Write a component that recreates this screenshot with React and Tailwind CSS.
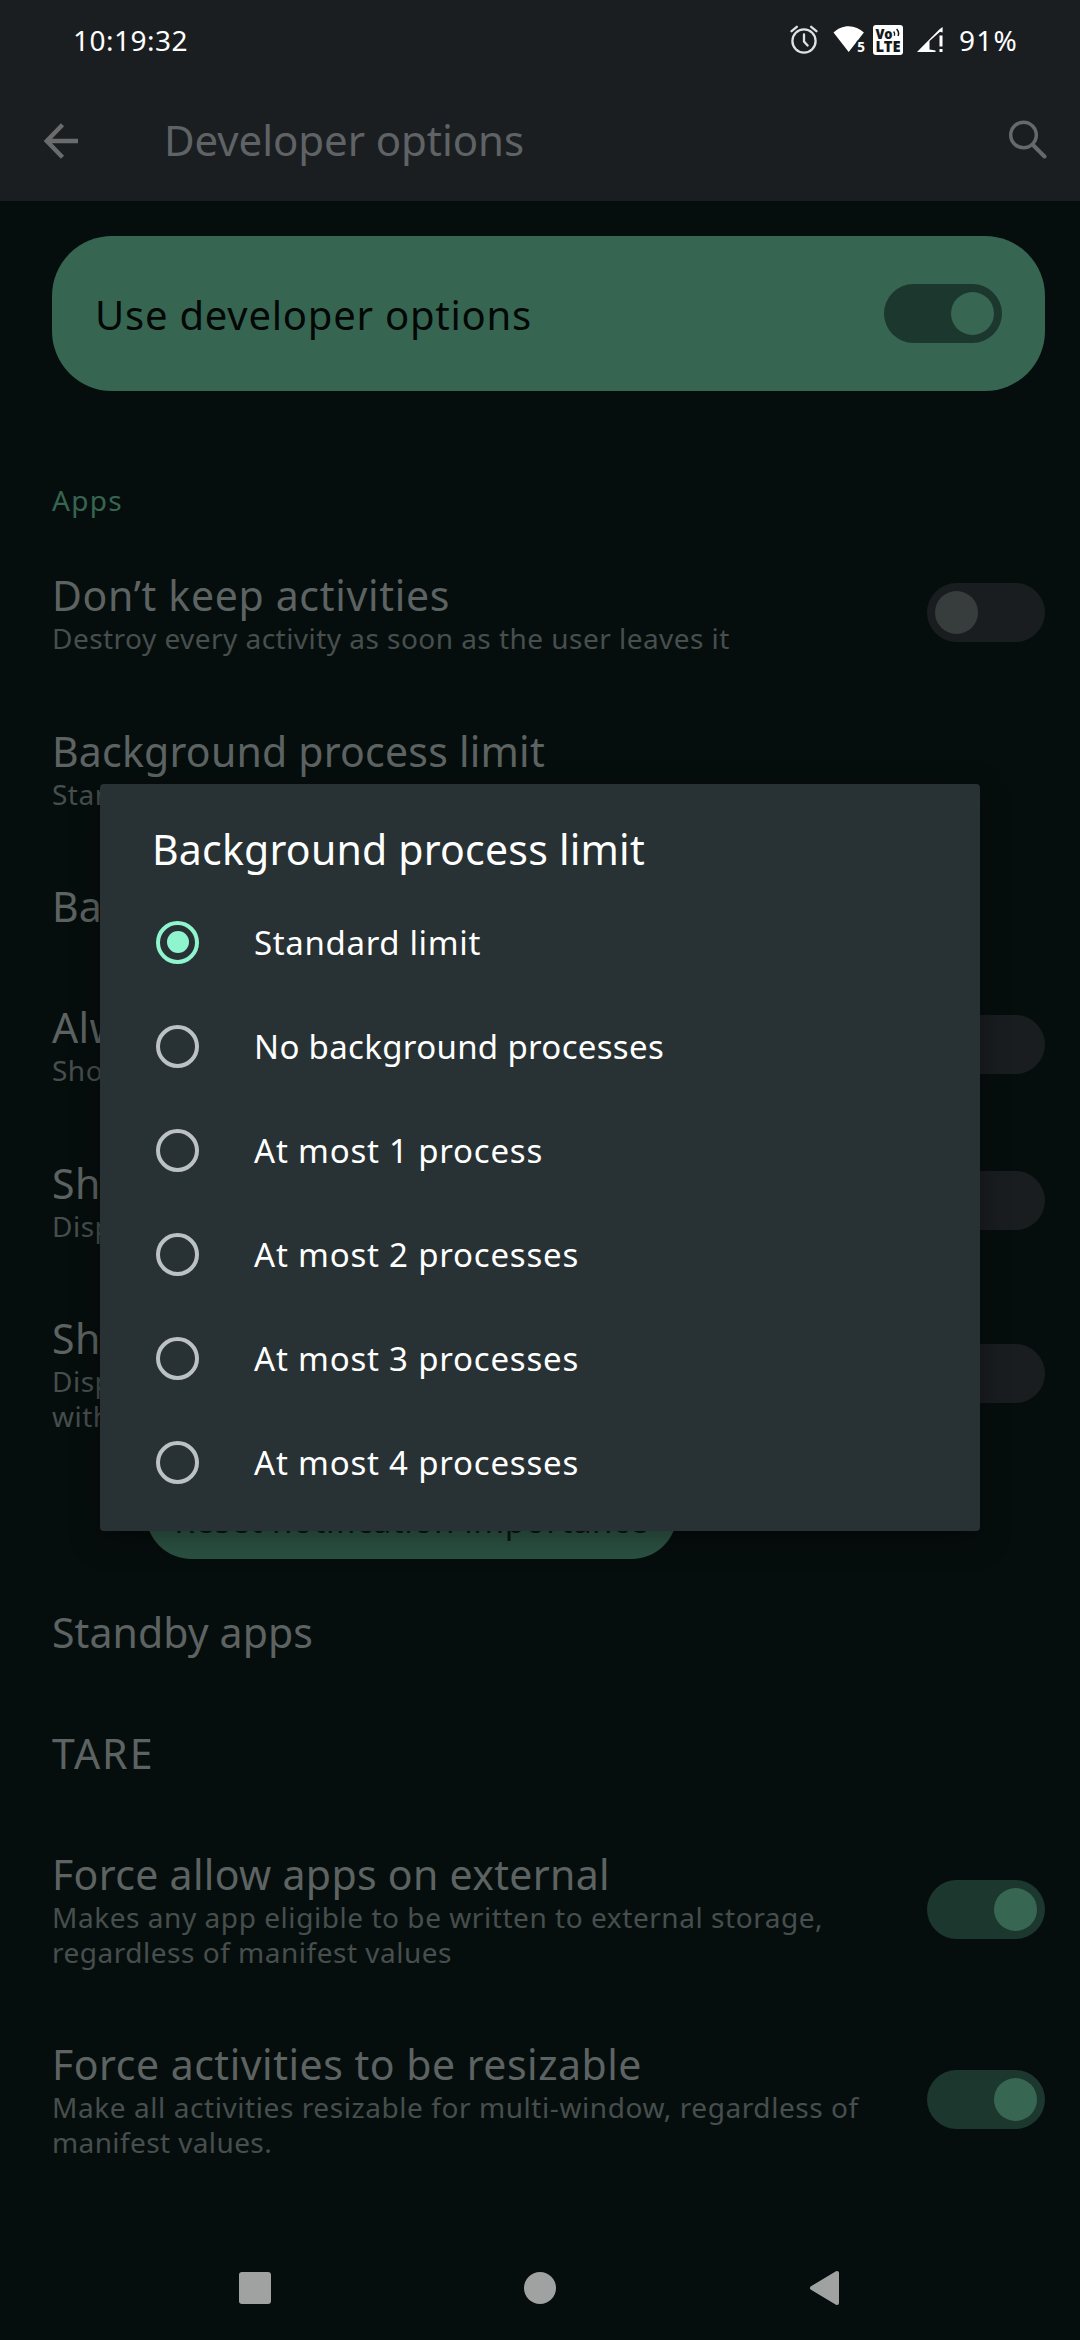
import { useState } from 'react';

const preferences = [
  {
    title: 'Don’t keep activities',
    tracking: 'tracking-[0.67px]',
    lines: [{ text: 'Destroy every activity as soon as the user leaves it', tracking: 'tracking-[0.46px]' }],
    checked: false,
  },
  {
    title: 'Background process limit',
    tracking: 'tracking-[0.22px]',
    lines: [{ text: 'Standard limit', tracking: 'tracking-[0.5px]' }],
  },
  { title: 'Background check', tracking: 'tracking-[0.22px]', lines: [] },
  {
    title: 'Always show crash dialog',
    tracking: 'tracking-[0.4px]',
    lines: [{ text: 'Show dialog every time an app crashes', tracking: 'tracking-[0.5px]' }],
    checked: false,
  },
  {
    title: 'Show background ANRs',
    tracking: 'tracking-[0.4px]',
    lines: [{ text: 'Display App Not Responding dialog for background apps', tracking: 'tracking-[0.5px]' }],
    checked: false,
  },
  {
    title: 'Show notification channel warnings',
    tracking: 'tracking-[0.4px]',
    lines: [
      { text: 'Displays on-screen warning when an app posts', tracking: 'tracking-[0.5px]' },
      { text: 'without a valid channel', tracking: 'tracking-[0.5px]' },
    ],
    checked: false,
  },
];

const morePreferences = [
  { title: 'Standby apps', tracking: 'tracking-[0.09px]', lines: [] },
  { title: 'TARE', tracking: 'tracking-[2px]', lines: [] },
  {
    title: 'Force allow apps on external',
    tracking: 'tracking-[0.32px]',
    lines: [
      { text: 'Makes any app eligible to be written to external storage,', tracking: 'tracking-[0.55px]' },
      { text: 'regardless of manifest values', tracking: 'tracking-[0.51px]' },
    ],
    checked: true,
  },
  {
    title: 'Force activities to be resizable',
    tracking: 'tracking-[0.5px]',
    lines: [
      { text: 'Make all activities resizable for multi-window, regardless of', tracking: 'tracking-[0.57px]' },
      { text: 'manifest values.', tracking: 'tracking-[0.39px]' },
    ],
    checked: true,
  },
];

const limits = [
  { label: 'Standard limit', tracking: 'tracking-[0.65px]' },
  { label: 'No background processes', tracking: 'tracking-[0.33px]' },
  { label: 'At most 1 process', tracking: 'tracking-[0.8px]' },
  { label: 'At most 2 processes', tracking: 'tracking-[0.8px]' },
  { label: 'At most 3 processes', tracking: 'tracking-[0.8px]' },
  { label: 'At most 4 processes', tracking: 'tracking-[0.8px]' },
];

function Switch({ checked }) {
  return (
    <div
      className={`flex h-[59px] w-[118px] shrink-0 items-center rounded-full px-2 ${
        checked ? 'justify-end bg-[#1b372e]' : 'justify-start bg-[#1a1d20]'
      }`}
    >
      <div className={`size-[43px] rounded-full ${checked ? 'bg-[#376653]' : 'bg-[#363d3c]'}`} />
    </div>
  );
}

function Preference({ title, tracking, lines, checked }) {
  return (
    <div className="flex items-center justify-between pr-[35px] pl-[52px]">
      <div className="flex flex-col py-[35px] whitespace-nowrap">
        <p className={`text-[41px] leading-[51px] text-[#5d6362] ${tracking}`}>{title}</p>
        {lines.map((line) => (
          <p key={line.text} className={`text-[28px] leading-[34.5px] text-[#474e4d] ${line.tracking}`}>
            {line.text}
          </p>
        ))}
      </div>
      {checked !== undefined && <Switch checked={checked} />}
    </div>
  );
}

function StatusBar() {
  return (
    <div className="flex h-[80px] items-center justify-between pr-[62px] pl-[73px] text-[28px] text-white">
      <span className="tracking-[0.49px]">10:19:32</span>
      <div className="flex items-center">
        <svg className="h-[32px] w-[28px]" viewBox="0 0 28 32" fill="none" stroke="#dfe2e3" strokeWidth="2.3" strokeLinecap="round">
          <circle cx="14" cy="17" r="11.6" />
          <path d="M14 10.5v7l3.6 4M1.6 7.2l5.2-4.4M26.4 7.2l-5.2-4.4" />
        </svg>
        {/* Wi-Fi 5 */}
        <svg className="ml-[15px] h-[32px] w-[33px]" viewBox="0 0 33 32">
          <path d="M.5 8.600C4.500 4.500 9.800 2.200 15.700 2.200S26.800 4.500 30.900 8.600L24.500 16.800L22.500 19.300L15.700 28z" fill="#fff" />
          <path d="M24.500 16.500h8.500v13h-10v-11z" fill="#1b1e21" />
          <text x="24.300" y="28.200" fontSize="13.500" fontWeight="700" fill="#fff">5</text>
        </svg>
        {/* VoLTE */}
        <svg className="ml-[7px] h-[32px] w-[30px]" viewBox="0 0 30 32">
          <rect y="1" width="30" height="30" rx="3" fill="#fff" />
          <text x="2.500" y="14.800" fontSize="14" fontWeight="900" fill="#15181b" textLength="17" lengthAdjust="spacingAndGlyphs">Vo</text>
          <path d="M20.600 7.600q1.800 1.900.8 4.200M23.600 5q3 3.200 1.500 7" fill="none" stroke="#15181b" strokeWidth="1.500" />
          <text x="2.500" y="28" fontSize="15" fontWeight="900" fill="#15181b" textLength="25" lengthAdjust="spacingAndGlyphs">LTE</text>
        </svg>
        <svg className="ml-[14px] h-[32px] w-[27px]" viewBox="0 0 27 32">
          <path d="M0 28L22.500 5.200L25.600 3V8.500L23 7.800L14 15.800L12.500 17V25.500L18.500 26.500V28z" fill="#fff" />
          <path d="M22.500 11.500h3v11h-3zM22.500 25h3v3h-3z" fill="#fff" />
        </svg>
        <span className="ml-[15px] tracking-[1.2px]">91%</span>
      </div>
    </div>
  );
}

function Header() {
  return (
    <div className="flex h-[121px] items-center pr-[32px] pl-[43px]">
      <svg className="h-[36px] w-[36px]" viewBox="0 0 36 36" fill="none" stroke="#696b6c" strokeWidth="4.500">
        <path d="M35 18H4M19.500 1.800L3.800 18L19.500 34.200" />
      </svg>
      <h1 className="ml-[85px] flex-1 pb-0.5 text-[42px] tracking-[-0.08px] text-[#5f6365]">Developer options</h1>
      <svg className="mb-1 h-[40px] w-[40px]" viewBox="0 0 40 40" fill="none" stroke="#66696a" strokeWidth="3.500" strokeLinecap="round">
        <circle cx="15.500" cy="16" r="12.800" />
        <path d="M25 26l11.500 11.500" strokeWidth="4" />
      </svg>
    </div>
  );
}

function LimitDialog({ selected, onSelect }) {
  return (
    <div className="absolute top-[784px] left-[100px] w-[880px] rounded bg-[#283234] pt-10 pb-[17px] text-white shadow-[0_8px_30px_rgba(0,0,0,0.4)]">
      <h2 className="mb-4 pl-[52px] text-[41px] leading-[50px] tracking-[0.22px]">Background process limit</h2>
      {limits.map((limit, idx) => (
        <div key={limit.label} className="flex h-[104px] items-center pl-14" onClick={() => onSelect(idx)}>
          <div
            className={`flex size-[43px] items-center justify-center rounded-full border-4 ${
              selected === idx ? 'border-[#8ef5cf]' : 'border-[#bcc2c3]'
            }`}
          >
            {selected === idx && <div className="size-[22px] rounded-full bg-[#8ef5cf]" />}
          </div>
          <span className={`ml-[55px] pt-px text-[33px] ${limit.tracking}`}>{limit.label}</span>
        </div>
      ))}
    </div>
  );
}

export default function App() {
  const [selected, setSelected] = useState(0);

  return (
    <div className="relative flex h-[2340px] w-[1080px] flex-col overflow-hidden bg-[#060e0d] font-['Noto_Sans',sans-serif]">
      <div className="h-[201px] bg-[#1b1e21]">
        <StatusBar />
        <Header />
      </div>

      {/* Main toggle */}
      <div className="mt-[35px] mr-[35px] ml-[52px] flex h-[155px] items-center justify-between rounded-[60px] bg-[#366552] pr-[43px] pl-[43px]">
        <span className="pt-0.5 text-[40px] tracking-[0.77px] text-[#030706]">Use developer options</span>
        <Switch checked />
      </div>

      <p className="mt-[89px] pl-[52px] text-[28px] leading-[40px] tracking-[1.3px] text-[#366552]">Apps</p>

      <div className="mt-[15px]">
        {preferences.map((pref) => (
          <Preference key={pref.title} {...pref} />
        ))}
      </div>

      <div className="h-[104px] pl-[146px]">
        <div className="flex h-[91px] w-[531px] items-center justify-center rounded-[46px] bg-gradient-to-b from-[#366552] to-[#2b5242] pt-3.5 text-[33px] tracking-[0.6px] text-[#0a1713]">
          Reset notification importance
        </div>
      </div>

      <div>
        {morePreferences.map((pref) => (
          <Preference key={pref.title} {...pref} />
        ))}
      </div>

      {/* Navigation bar */}
      <div className="mt-auto flex h-[104px] items-center pl-[239px]">
        <div className="size-8 rounded-[3px] bg-[#9fa2a1]" />
        <div className="ml-[253px] size-8 rounded-full bg-[#9fa2a1]" />
        <svg className="ml-[253px] h-[36px] w-[32px]" viewBox="0 0 32 36">
          <path d="M3 18L28 3V33z" fill="#9fa2a1" stroke="#9fa2a1" strokeWidth="4" strokeLinejoin="round" />
        </svg>
      </div>

      <LimitDialog selected={selected} onSelect={setSelected} />
    </div>
  );
}
